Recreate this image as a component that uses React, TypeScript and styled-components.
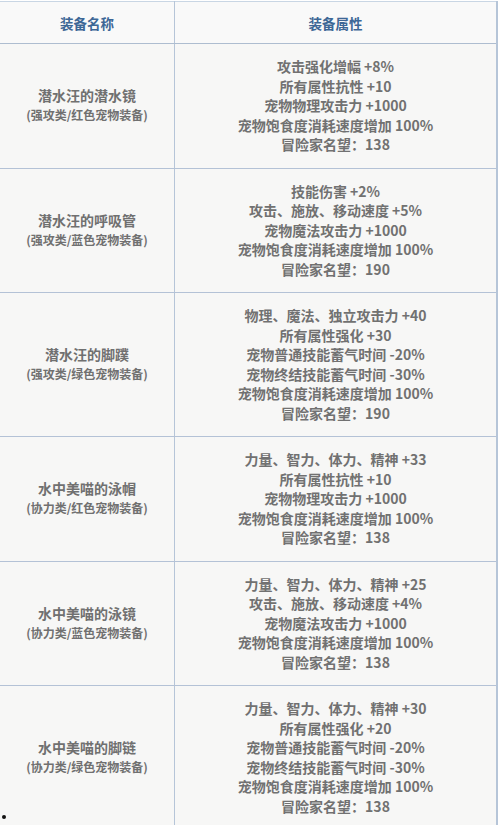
import React from 'react'
import styled, { createGlobalStyle } from 'styled-components'

type EquipType = {
	name: string
	kind: string
	attrs: string[]
}

const equips: EquipType[] = [
	{
		name: '潜水汪的潜水镜',
		kind: '(强攻类/红色宠物装备)',
		attrs: ['攻击强化增幅 +8%', '所有属性抗性 +10', '宠物物理攻击力 +1000', '宠物饱食度消耗速度增加 100%', '冒险家名望：138'],
	},
	{
		name: '潜水汪的呼吸管',
		kind: '(强攻类/蓝色宠物装备)',
		attrs: ['技能伤害 +2%', '攻击、施放、移动速度 +5%', '宠物魔法攻击力 +1000', '宠物饱食度消耗速度增加 100%', '冒险家名望：190'],
	},
	{
		name: '潜水汪的脚蹼',
		kind: '(强攻类/绿色宠物装备)',
		attrs: [
			'物理、魔法、独立攻击力 +40',
			'所有属性强化 +30',
			'宠物普通技能蓄气时间 -20%',
			'宠物终结技能蓄气时间 -30%',
			'宠物饱食度消耗速度增加 100%',
			'冒险家名望：190',
		],
	},
	{
		name: '水中美喵的泳帽',
		kind: '(协力类/红色宠物装备)',
		attrs: ['力量、智力、体力、精神 +33', '所有属性抗性 +10', '宠物物理攻击力 +1000', '宠物饱食度消耗速度增加 100%', '冒险家名望：138'],
	},
	{
		name: '水中美喵的泳镜',
		kind: '(协力类/蓝色宠物装备)',
		attrs: ['力量、智力、体力、精神 +25', '攻击、施放、移动速度 +4%', '宠物魔法攻击力 +1000', '宠物饱食度消耗速度增加 100%', '冒险家名望：138'],
	},
	{
		name: '水中美喵的脚链',
		kind: '(协力类/绿色宠物装备)',
		attrs: [
			'力量、智力、体力、精神 +30',
			'所有属性强化 +20',
			'宠物普通技能蓄气时间 -20%',
			'宠物终结技能蓄气时间 -30%',
			'宠物饱食度消耗速度增加 100%',
			'冒险家名望：138',
		],
	},
]

export default function App() {
	return (
		<>
			<GlobalStyle />
			<Page>
				<EquipTable>
					<thead>
						<tr>
							<HeadCell $width={174}>装备名称</HeadCell>
							<HeadCell>装备属性</HeadCell>
						</tr>
					</thead>
					<tbody>
						{equips.map(equip => (
							<tr key={equip.name}>
								<NameCell>
									<Name>{equip.name}</Name>
									<Kind>{equip.kind}</Kind>
								</NameCell>
								<AttrCell>
									{equip.attrs.map(attr => (
										<Attr key={attr}>{attr}</Attr>
									))}
								</AttrCell>
							</tr>
						))}
					</tbody>
				</EquipTable>
				<Bullet />
			</Page>
		</>
	)
}

const GlobalStyle = createGlobalStyle`
	html, body {
		margin: 0;
		padding: 0;
		background: #ffffff;
	}
	body {
		font-family: "Noto Sans CJK SC", "Noto Sans", sans-serif;
	}
`

const Page = styled.div`
	position: relative;
	width: 500px;
	height: 825px;
	overflow: hidden;
	padding-top: 1px;
	box-sizing: border-box;
`

const EquipTable = styled.table`
	width: 498px;
	border-collapse: collapse;
	background: #f7f7f6;
	table-layout: fixed;
	border-top: 1px solid #c9d6e4;
	border-right: 2px solid #b6c5d8;
`

const HeadCell = styled.th<{ $width?: number }>`
	width: ${p => (p.$width ? `${p.$width}px` : 'auto')};
	height: 41px;
	padding: 0;
	font-size: 13.5px;
	font-weight: 700;
	color: #3d6796;
	text-align: center;
	border-bottom: 1px solid #aebdd0;
	border-right: 1px solid #b6c5d8;
	background: #f9f9f9;
`

const NameCell = styled.td`
	padding: 0;
	text-align: center;
	vertical-align: middle;
	color: #707070;
	border-bottom: 1px solid #b4c2d6;
	border-right: 1px solid #b6c5d8;
`

const Name = styled.div`
	font-size: 14px;
	line-height: 19px;
	font-weight: 700;
`

const Kind = styled.div`
	font-size: 12px;
	line-height: 20px;
	font-weight: 700;
`

const AttrCell = styled.td`
	padding: 13px 0;
	text-align: center;
	vertical-align: middle;
	color: #717171;
	border-bottom: 1px solid #b4c2d6;
`

const Attr = styled.div`
	font-size: 14px;
	line-height: 19.5px;
	font-weight: 700;
	white-space: nowrap;
`

const Bullet = styled.span`
	position: absolute;
	left: 2px;
	top: 815px;
	width: 4px;
	height: 4px;
	border-radius: 50%;
	background: #111111;
`
